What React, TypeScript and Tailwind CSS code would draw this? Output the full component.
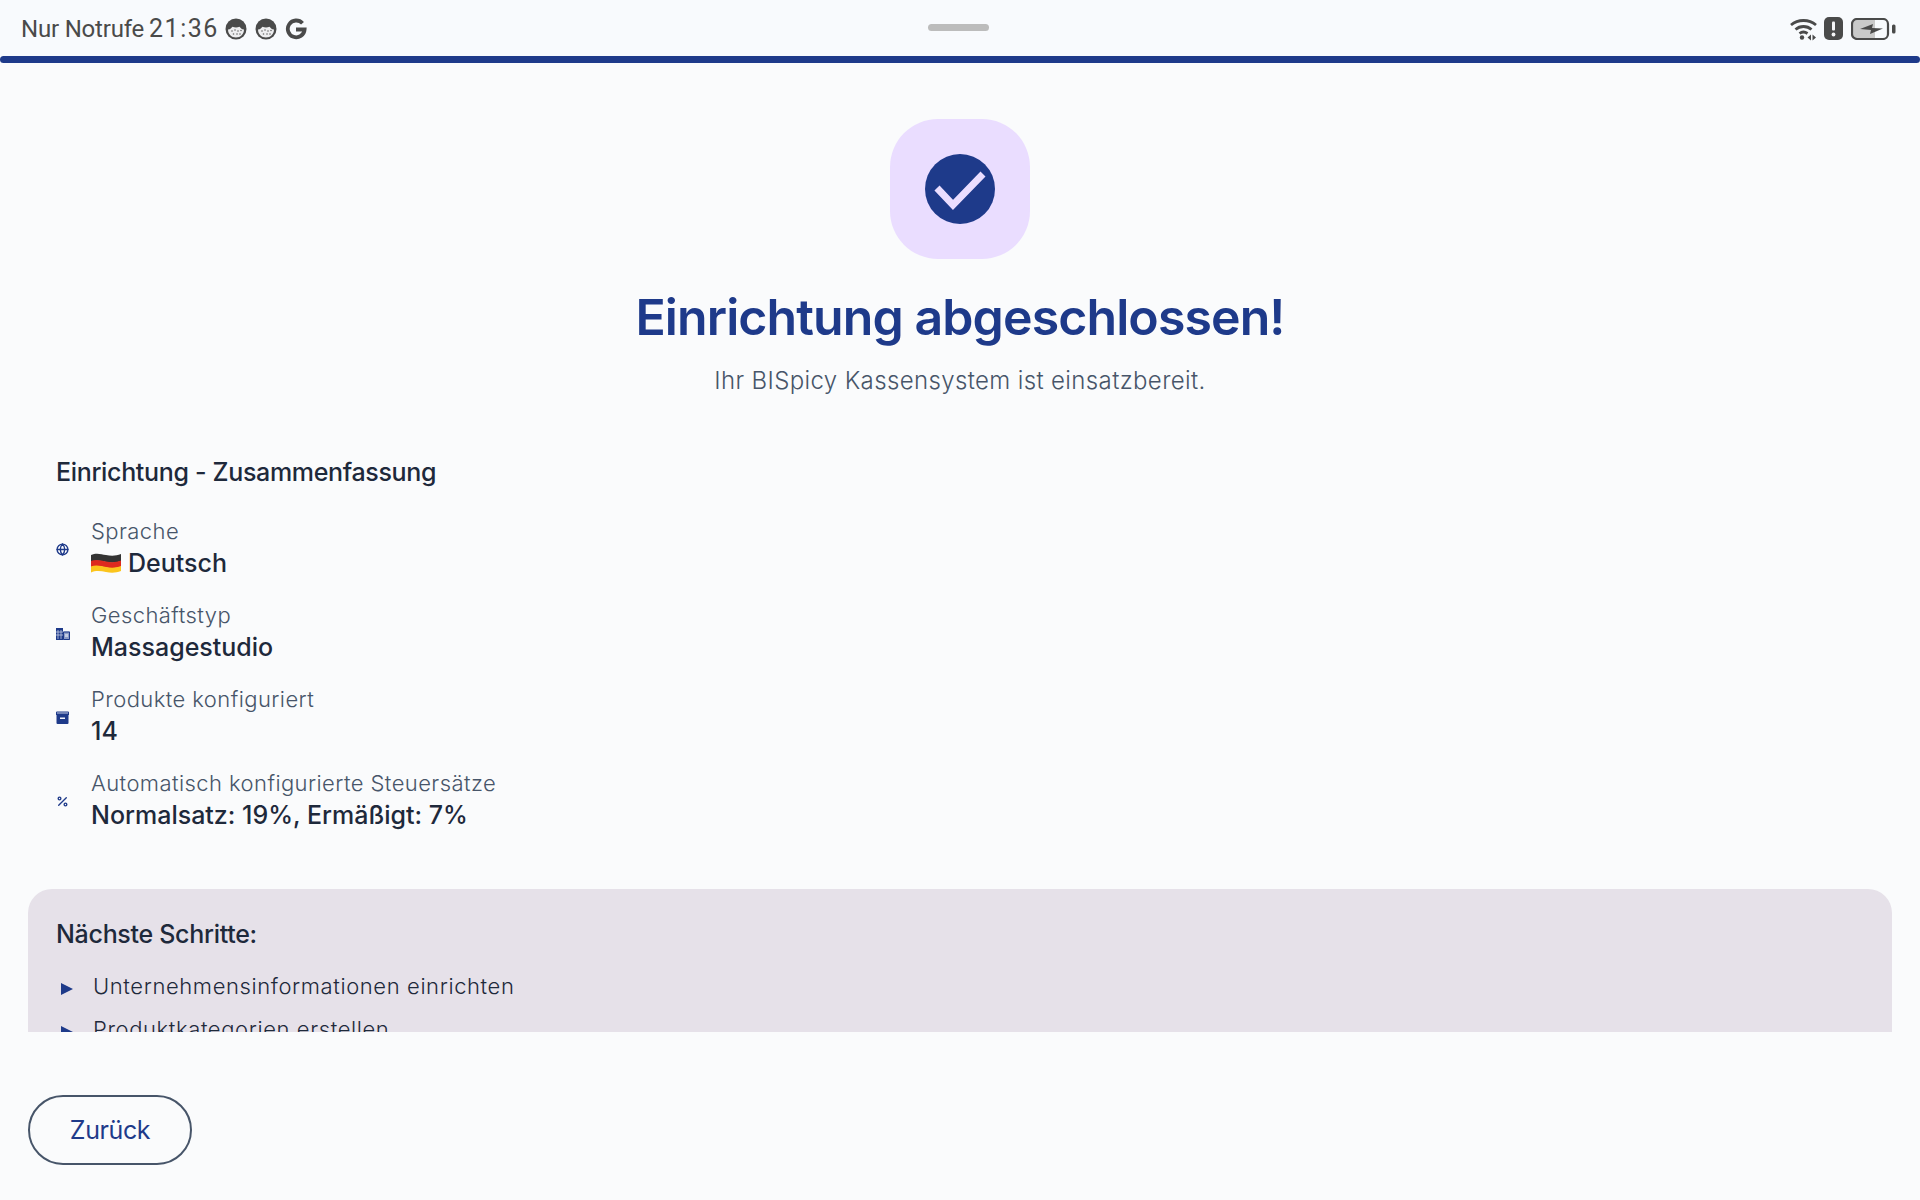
import React from 'react';
import { Globe, Percent } from 'lucide-react';

const FaceIcon = () => (
  <svg width="22" height="22" viewBox="0 0 22 22">
    <circle cx="11" cy="11" r="10.500" fill="#4a4a4a" />
    <path d="M3 11.500c2.500-.3 3.500-1.800 4.500-2.800 2.300.9 4.700.9 7 0 1 1 2 2.500 4.500 2.800 0 4.500-3.500 8-8 8s-8-3.500-8-8z" fill="#ededef" />
    <g fill="#6a6a6a">
      <circle cx="7" cy="13" r="0.8" />
      <circle cx="10" cy="12" r="0.8" />
      <circle cx="13" cy="13" r="0.8" />
      <circle cx="16" cy="12.500" r="0.8" />
      <circle cx="8.500" cy="16" r="0.8" />
      <circle cx="12" cy="16" r="0.8" />
      <circle cx="15" cy="16" r="0.8" />
    </g>
  </svg>
);

const GoogleIcon = () => (
  <svg width="22" height="22" viewBox="0 0 22 22" fill="none">
    <path d="M17.500 5.300A8.400 8.400 0 1 0 19.600 11.500H11" stroke="#4a4a4a" strokeWidth="3.800" />
  </svg>
);

const StatusRight = () => (
  <div className="flex items-center">
    <svg width="28" height="24" viewBox="0 0 28 24" fill="none" className="mr-[6px]">
      <path d="M1 8C8 2 19 2 26 8" stroke="#4a4a4a" strokeWidth="2.800" />
      <path d="M5.500 12.500C10 8.500 17 8.500 21.500 12.500" stroke="#4a4a4a" strokeWidth="2.800" />
      <path d="M9.500 16.500c2.300-1.800 5.500-1.800 8 0" stroke="#4a4a4a" strokeWidth="2.800" />
      <circle cx="12" cy="20.500" r="2.200" fill="#4a4a4a" />
      <path d="M21 17.500V23.500l-3.500-3zM22.500 17.500l3.500 3-3.500 3z" fill="#4a4a4a" />
    </svg>
    <svg width="19" height="23" viewBox="0 0 19 23" className="mr-[8px]">
      <path d="M5 0h9a5 5 0 0 1 5 5v13a5 5 0 0 1-5 5H5a5 5 0 0 1-5-5V5a5 5 0 0 1 5-5z" fill="#4a4a4a" />
      <rect x="8" y="4.500" width="3" height="9" rx="1" fill="#f5f5f7" />
      <circle cx="9.500" cy="17.500" r="1.900" fill="#f5f5f7" />
    </svg>
    <svg width="45" height="22" viewBox="0 0 45 22" fill="none">
      <rect x="2" y="2" width="22" height="18" fill="#c9c9c9" />
      <rect x="1" y="1" width="36" height="20" rx="5" stroke="#4a4a4a" strokeWidth="2.200" />
      <path d="M9 11L22 6l-1 4 11 .5L19 16l1-4z" fill="#4a4a4a" />
      <rect x="41" y="6.500" width="3.500" height="9" rx="1.500" fill="#4a4a4a" />
    </svg>
  </div>
);

const GermanFlag = () => (
  <svg width="30" height="24" viewBox="0 0 30 24" className="mr-[7px] shrink-0">
    <path d="M0 4c5-2.500 10-1 15 0s10 1 15-1v7c-5 2-10 2-15 1S5 9 0 11z" fill="#333333" />
    <path d="M0 10c5-2 10-.5 15 .5s10 1 15-1v6c-5 2-10 2-15 1S5 14 0 16z" fill="#dd2a1f" />
    <path d="M0 15.500c5-2 10-.5 15 .5s10 1 15-1V20c-5 2-10 2-15 1S5 19 0 21.500z" fill="#fbc51d" />
  </svg>
);

const CompanyIcon = () => (
  <svg width="14" height="12" viewBox="0 0 14 12" fill="none">
    <path d="M0 0h7v12H0z" fill="#1e3a8a" />
    <path d="M7 3.500h7V12H7z" fill="#8d9cc6" />
    <path d="M7.500 4h6v7.500h-6z" stroke="#1e3a8a" strokeWidth="1" />
    <path d="M2 2v9M5 2v9M0 4h7M0 7h7" stroke="#c3cce3" strokeWidth="0.8" />
    <rect x="9" y="6" width="3" height="3" fill="#c3cce3" />
  </svg>
);

const BoxIcon = () => (
  <svg width="13" height="13" viewBox="0 0 13 13">
    <path d="M0 1.500a1 1 0 0 1 1-1h11a1 1 0 0 1 1 1V4H0z" fill="#1e3a8a" />
    <rect x="1" y="1.500" width="11" height="1" fill="#c3cce3" />
    <path d="M.5 4h12v8a1 1 0 0 1-1 1h-10a1 1 0 0 1-1-1z" fill="#1e3a8a" />
    <rect x="4" y="6.500" width="5" height="1.500" fill="#f3f5fb" />
  </svg>
);

const rows = [
  { icon: <Globe size={13} strokeWidth={2.500} />, label: 'Sprache', value: 'Deutsch', flag: true },
  { icon: <CompanyIcon />, label: 'Geschäftstyp', value: 'Massagestudio' },
  { icon: <BoxIcon />, label: 'Produkte konfiguriert', value: '14' },
  { icon: <Percent size={13} strokeWidth={2.500} />, label: 'Automatisch konfigurierte Steuersätze', value: 'Normalsatz: 19%, Ermäßigt: 7%' },
];

export default function App() {
  return (
    <div className="w-[1920px] h-[1200px] overflow-hidden flex flex-col bg-[#fafbfc] font-['Inter',sans-serif]">
      {/* status bar */}
      <div className="relative h-14 shrink-0 flex items-center justify-between pl-[21px] pr-6 pt-[1px] bg-[#f8fafd] text-[#4a4a4a] font-['Roboto',sans-serif]">
        <div className="flex items-center">
          <span className="text-[24px] tracking-[-0.2px]">Nur Notrufe</span>
          <span className="ml-[5px] mr-[6px] text-[25px] tracking-[1.5px]">21:36</span>
          <div className="flex items-center gap-[8px]">
            <FaceIcon />
            <FaceIcon />
            <GoogleIcon />
          </div>
        </div>
        <div className="absolute left-[928px] top-[24px] h-[7px] w-[61px] rounded-full bg-[#bcbcbc]" />
        <StatusRight />
      </div>
      <div className="h-[7px] shrink-0 rounded-full bg-[#1e3a8a]" />

      {/* scroll content */}
      <div className="flex-1 min-h-0 overflow-hidden px-7">
        <div className="flex flex-col items-center pt-14">
          <div className="flex h-[140px] w-[140px] items-center justify-center rounded-[48px] bg-[#eaddff]">
            <div className="h-[70px] w-[70px] rounded-full bg-[#1e3a8a]">
              <svg width="70" height="70" viewBox="0 0 70 70" fill="none">
                <path d="M12 34l16 17 30-31" stroke="#eaddff" strokeWidth="7" />
              </svg>
            </div>
          </div>
          <h1 className="mt-[26px] text-[50px] leading-[64px] font-semibold tracking-[-0.9px] text-[#1e3a8a]">Einrichtung abgeschlossen!</h1>
          <p className="mt-[16px] text-[24px] leading-8 font-light tracking-[0.37px] text-[#475569]">Ihr BISpicy Kassensystem ist einsatzbereit.</p>
        </div>

        <div className="px-7 pt-[59px]">
          <h2 className="text-[25px] leading-8 font-medium tracking-[-0.33px] text-[#1e293b]">Einrichtung - Zusammenfassung</h2>
          <div className="mt-[27px] flex flex-col gap-[20px]">
            {rows.map((row) => (
              <div key={row.label} className="flex items-center">
                <div className="mt-[5px] w-[35px] shrink-0 text-[#1e3a8a]">{row.icon}</div>
                <div>
                  <div className="text-[22px] leading-8 font-light tracking-[0.42px] text-[#475569]">{row.label}</div>
                  <div className="flex items-center text-[25px] leading-8 font-medium text-[#1e293b]">
                    {row.flag && <GermanFlag />}
                    {row.value}
                  </div>
                </div>
              </div>
            ))}
          </div>
        </div>

        <div className="mt-[58px] rounded-[24px] bg-[#e6e1e9] px-7 pt-[29px] pb-7">
          <h3 className="text-[25px] leading-8 font-medium tracking-[-0.3px] text-[#1e293b]">Nächste Schritte:</h3>
          <ul className="mt-[20px] flex flex-col gap-[11px]">
            {['Unternehmensinformationen einrichten', 'Produktkategorien erstellen'].map((step) => (
              <li key={step} className="flex items-center text-[22px] leading-8 font-light tracking-[0.6px] text-[#1e293b]">
                <span className="mt-[6px] mr-[20px] ml-[5px] h-0 w-0 border-y-[6px] border-l-[12px] border-y-transparent border-l-[#1e3a8a]" />
                {step}
              </li>
            ))}
          </ul>
        </div>
      </div>

      {/* footer */}
      <div className="h-[168px] shrink-0 px-7 pt-[63px]">
        <button className="h-[70px] w-[164px] rounded-full border-2 border-[#475569] pt-[2px] text-[25px] tracking-[-0.4px] text-[#1e3a8a]">Zurück</button>
      </div>
    </div>
  );
}
